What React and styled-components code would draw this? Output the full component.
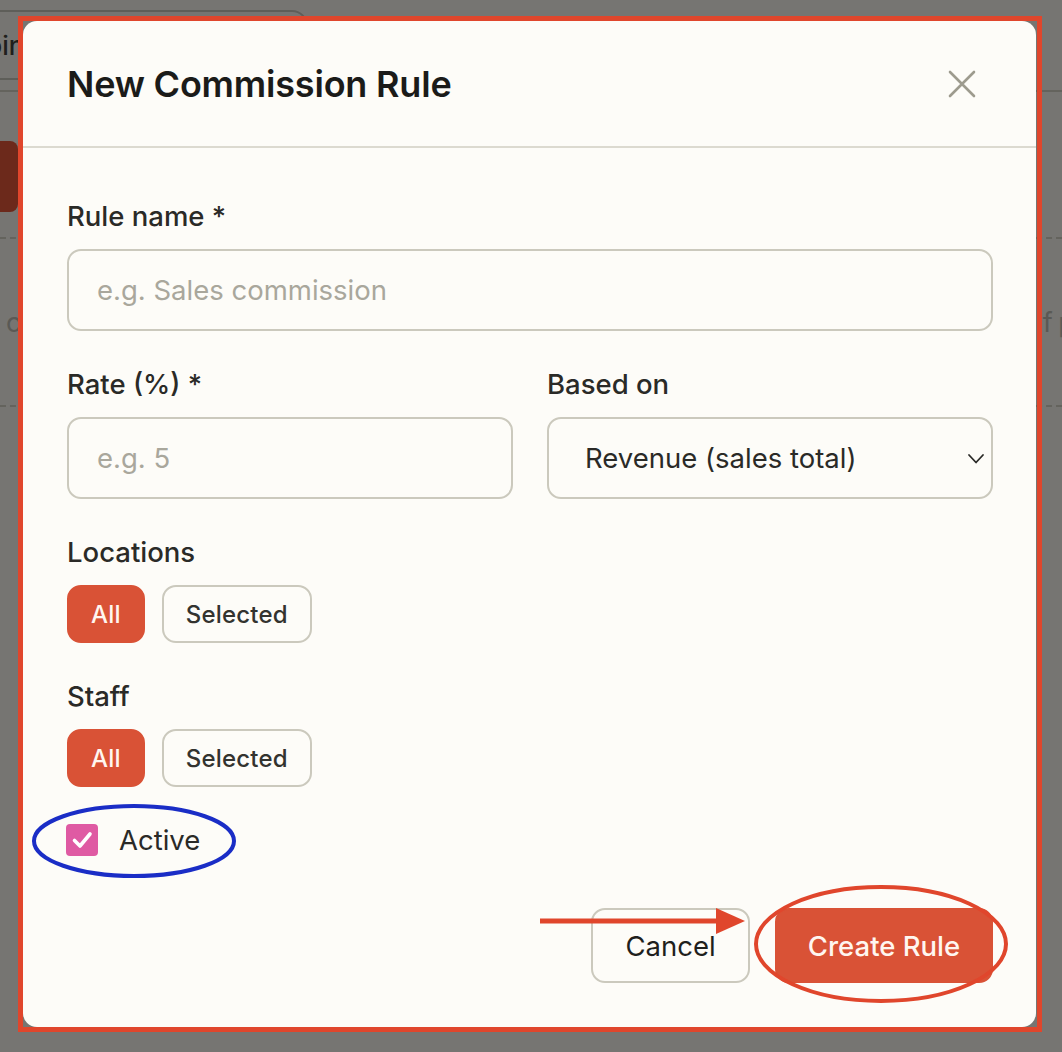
import React, { useState } from "react";
import styled, { createGlobalStyle } from "styled-components";

const GlobalStyle = createGlobalStyle`
  html, body {
    margin: 0;
    padding: 0;
    width: 1062px;
    height: 1052px;
    overflow: hidden;
    font-family: Inter, "Noto Sans", "Liberation Sans", sans-serif;
    -webkit-font-smoothing: antialiased;
  }
  * { box-sizing: border-box; }
`;

const RED = "#d95236";
const BORDER = "#cbc9bd";
const INK = "#2a2a27";

// ---- page behind the dialog ----

const Page = styled.div`
  position: relative;
  width: 1062px;
  height: 1052px;
  overflow: hidden;
  background: #ecebe4;
  display: flex;
  flex-direction: column;
`;

const TopBar = styled.div`
  height: 92px;
  border-bottom: 2px solid #c9c7bb;
  padding-top: 10px;
`;

const TabPill = styled.div`
  margin-left: -90px;
  width: 398px;
  height: 70px;
  border: 2px solid #bdbcb3;
  border-radius: 16px;
  display: flex;
  align-items: center;
  padding-left: 24px;
  font-size: 26px;
  font-weight: 500;
  color: #3f3f3a;
  white-space: nowrap;
`;

const Actions = styled.div`
  padding-top: 49px;
  height: 145px;
`;

const GhostButton = styled.div`
  margin-left: -102px;
  width: 120px;
  height: 71px;
  border-radius: 8px;
  background: ${RED};
`;

const ListRow = styled.div`
  height: 170px;
  border-top: 2px dashed #c9c7bb;
  border-bottom: 2px dashed #c9c7bb;
  display: flex;
  align-items: center;
  padding-left: 6px;
  font-size: 27px;
  color: #b4b3aa;
  white-space: nowrap;
`;

const RowTail = styled.span`
  margin-left: auto;
  margin-right: -43px;
  word-spacing: -2px;
`;

// ---- dialog ----

const Overlay = styled.div`
  position: absolute;
  inset: 0;
  background: rgba(0, 0, 0, 0.5);
  padding: 21px 26px 25px 23px;
  display: flex;
  align-items: flex-start;
`;

const Dialog = styled.div`
  width: 1013px;
  background: #fdfcf8;
  border-radius: 14px;
  display: flex;
  flex-direction: column;
`;

const Header = styled.div`
  height: 127px;
  border-bottom: 2px solid #dcdad0;
  display: flex;
  align-items: center;
  justify-content: space-between;
  padding: 0 56px 0 44px;
`;

const Title = styled.h2`
  margin: 0;
  font-size: 36px;
  font-weight: 600;
  color: #1b1b19;
  letter-spacing: -0.2px;
`;

const CloseButton = styled.button`
  width: 36px;
  height: 36px;
  padding: 0;
  border: 0;
  background: none;
  display: flex;
  align-items: center;
  justify-content: center;
  cursor: pointer;
`;

const Body = styled.div`
  padding: 52px 43px 44px 44px;
  display: flex;
  flex-direction: column;
  gap: 37px;
`;

const Row = styled.div`
  display: grid;
  grid-template-columns: 1fr 1fr;
  column-gap: 34px;
`;

const Field = styled.div`
  display: flex;
  flex-direction: column;
`;

const Label = styled.label`
  font-size: 27.5px;
  line-height: 32px;
  font-weight: 500;
  color: ${INK};
  margin-bottom: 17px;
`;

const Input = styled.input`
  height: 82px;
  width: 100%;
  border: 2px solid ${BORDER};
  border-radius: 14px;
  background: transparent;
  padding: 0 28px;
  font-family: inherit;
  font-size: 27.5px;
  color: ${INK};
  outline: none;
  &::placeholder {
    color: #a9a79c;
  }
`;

const SelectWrap = styled.div`
  position: relative;
`;

const Select = styled.select`
  appearance: none;
  -webkit-appearance: none;
  height: 82px;
  width: 100%;
  border: 2px solid ${BORDER};
  border-radius: 14px;
  background: transparent;
  padding: 0 40px 0 36px;
  font-family: inherit;
  font-size: 27.5px;
  color: ${INK};
  outline: none;
`;

const Chevron = styled.svg`
  position: absolute;
  right: 8px;
  top: 36px;
  pointer-events: none;
`;

const Segmented = styled.div`
  display: flex;
  gap: 17px;
`;

const Choice = styled.button`
  height: 58px;
  padding: 0 22px;
  border-radius: 14px;
  font-family: inherit;
  font-size: 24px;
  font-weight: 500;
  letter-spacing: 0.2px;
  cursor: pointer;
  border: 2px solid ${(p) => (p.$active ? RED : BORDER)};
  background: ${(p) => (p.$active ? RED : "transparent")};
  color: ${(p) => (p.$active ? "#fff6f0" : "#33332f")};
`;

const CheckRow = styled.label`
  display: flex;
  align-items: center;
  gap: 21px;
  font-size: 27.5px;
  line-height: 32px;
  color: ${INK};
  cursor: pointer;
`;

const CheckBox = styled.span`
  width: 32px;
  height: 32px;
  margin-left: -1px;
  border-radius: 4px;
  background: ${(p) => (p.$checked ? "#df5aa3" : "transparent")};
  border: ${(p) => (p.$checked ? "none" : `2px solid ${BORDER}`)};
  display: flex;
  align-items: center;
  justify-content: center;
`;

const Footer = styled.div`
  display: flex;
  justify-content: flex-end;
  gap: 25px;
  margin-top: 15px;
`;

const FooterButton = styled.button`
  height: 75px;
  padding: 0 30px;
  border-radius: 14px;
  font-family: inherit;
  font-size: 27.5px;
  font-weight: ${(p) => (p.$primary ? 500 : 400)};
  cursor: pointer;
  border: 2px solid ${(p) => (p.$primary ? RED : BORDER)};
  background: ${(p) => (p.$primary ? RED : "transparent")};
  color: ${(p) => (p.$primary ? "#fff6f0" : "#1f1f1d")};
  min-width: ${(p) => (p.$primary ? "218px" : "159px")};
`;

const Annotations = styled.svg`
  position: absolute;
  left: 0;
  top: 0;
  pointer-events: none;
`;

const Toggle = ({ value, onChange }) => (
  <Segmented>
    <Choice $active={value === "all"} onClick={() => onChange("all")}>
      All
    </Choice>
    <Choice $active={value === "selected"} onClick={() => onChange("selected")}>
      Selected
    </Choice>
  </Segmented>
);

export default function App() {
  const [locations, setLocations] = useState("all");
  const [staff, setStaff] = useState("all");
  const [active, setActive] = useState(true);

  return (
    <>
      <GlobalStyle />
      <Page>
        <TopBar>
          <TabPill>Appointments</TabPill>
        </TopBar>
        <Actions>
          <GhostButton />
        </Actions>
        <ListRow>
          <span>commission</span>
          <RowTail>f pay</RowTail>
        </ListRow>

        <Overlay>
          <Dialog>
            <Header>
              <Title>New Commission Rule</Title>
              <CloseButton aria-label="Close">
                <svg width="36" height="36" viewBox="0 0 36 36">
                  <path
                    d="M6 6 L30 30 M30 6 L6 30"
                    stroke="#9d9b8e"
                    strokeWidth="2.6"
                    strokeLinecap="round"
                  />
                </svg>
              </CloseButton>
            </Header>

            <Body>
              <Field>
                <Label>Rule name *</Label>
                <Input placeholder="e.g. Sales commission" />
              </Field>

              <Row>
                <Field>
                  <Label>Rate (%) *</Label>
                  <Input placeholder="e.g. 5" />
                </Field>
                <Field>
                  <Label>Based on</Label>
                  <SelectWrap>
                    <Select defaultValue="revenue">
                      <option value="revenue">Revenue (sales total)</option>
                      <option value="profit">Profit</option>
                    </Select>
                    <Chevron width="18" height="12" viewBox="0 0 18 12">
                      <path
                        d="M2 2 L9 9.5 L16 2"
                        fill="none"
                        stroke="#2a2a27"
                        strokeWidth="1.8"
                        strokeLinecap="round"
                        strokeLinejoin="round"
                      />
                    </Chevron>
                  </SelectWrap>
                </Field>
              </Row>

              <Field>
                <Label>Locations</Label>
                <Toggle value={locations} onChange={setLocations} />
              </Field>

              <Field>
                <Label>Staff</Label>
                <Toggle value={staff} onChange={setStaff} />
              </Field>

              <CheckRow onClick={() => setActive(!active)}>
                <CheckBox $checked={active}>
                  {active && (
                    <svg width="24" height="24" viewBox="0 0 24 24">
                      <path
                        d="M4.5 12.5 L10 18 L20 6"
                        fill="none"
                        stroke="#fff"
                        strokeWidth="3.6"
                        strokeLinecap="round"
                        strokeLinejoin="round"
                      />
                    </svg>
                  )}
                </CheckBox>
                Active
              </CheckRow>

              <Footer>
                <FooterButton>Cancel</FooterButton>
                <FooterButton $primary>Create Rule</FooterButton>
              </Footer>
            </Body>
          </Dialog>
        </Overlay>

        <Annotations width="1062" height="1052" viewBox="0 0 1062 1052">
          <rect
            x="20.5"
            y="18.5"
            width="1019"
            height="1011"
            fill="none"
            stroke="#e0462c"
            strokeWidth="5"
          />
          <ellipse
            cx="134"
            cy="841"
            rx="100"
            ry="35"
            fill="none"
            stroke="#1a2dc6"
            strokeWidth="4"
          />
          <ellipse
            cx="881"
            cy="944"
            rx="125"
            ry="57"
            fill="none"
            stroke="#e0462c"
            strokeWidth="4"
          />
          <line x1="540" y1="921" x2="722" y2="921" stroke="#e0462c" strokeWidth="5" />
          <polygon points="716,908 745,921 716,934" fill="#e0462c" />
        </Annotations>
      </Page>
    </>
  );
}
